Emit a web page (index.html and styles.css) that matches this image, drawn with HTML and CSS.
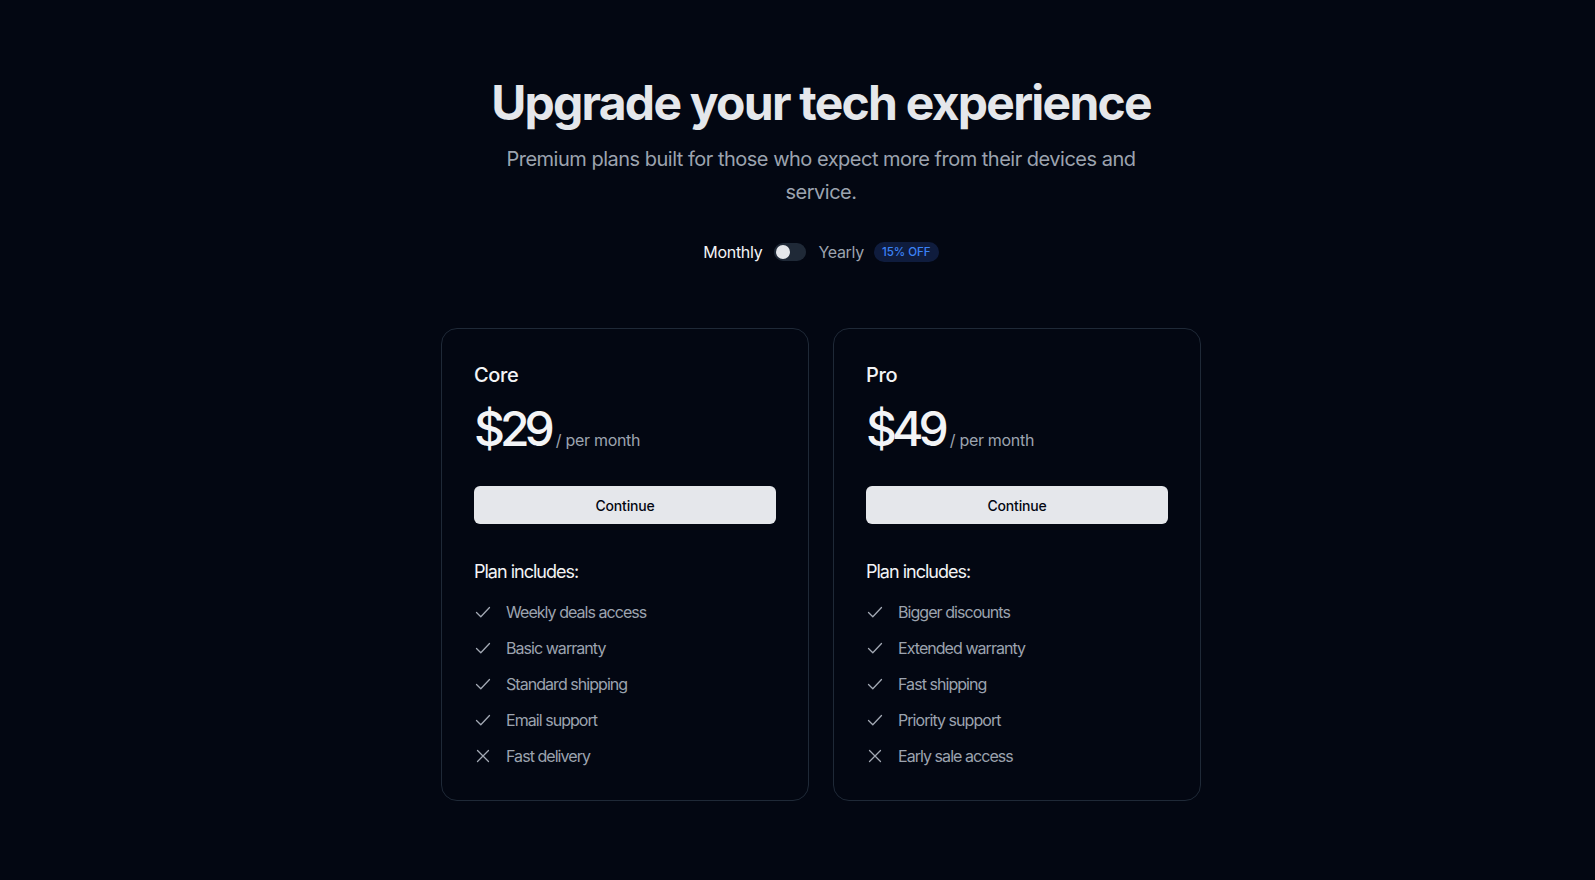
FILE: index.html
```html
<!DOCTYPE html>
<html lang="en">
<head>
    <meta charset="UTF-8">
    <meta name="viewport" content="width=device-width, initial-scale=1.0">
    <title>Pricing</title>
    <link rel="stylesheet" href="styles.css">
</head>
<body>

<main class="page">
    <header class="intro">
        <h1 class="title">Upgrade your tech experience</h1>
        <p class="subtitle">Premium plans built for those who expect more from their devices and service.</p>

        <div class="billing">
            <span class="billing-label active">Monthly</span>
            <button class="switch" aria-label="Toggle yearly billing"><span class="knob"></span></button>
            <span class="billing-label">Yearly</span>
            <span class="badge">15% OFF</span>
        </div>
    </header>

    <section class="plans">
        <div class="plan">
            <h2 class="plan-name">Core</h2>
            <div class="price"><span class="amount">$29</span><span class="period">/ per month</span></div>
            <button class="cta">Continue</button>
            <h3 class="includes">Plan includes:</h3>
            <ul class="features">
                <li><svg class="icon" viewBox="0 0 16 16"><path d="M1.5 8.5l4.3 4.3 8.7-9.3"/></svg>Weekly deals access</li>
                <li><svg class="icon" viewBox="0 0 16 16"><path d="M1.5 8.5l4.3 4.3 8.7-9.3"/></svg>Basic warranty</li>
                <li><svg class="icon" viewBox="0 0 16 16"><path d="M1.5 8.5l4.3 4.3 8.7-9.3"/></svg>Standard shipping</li>
                <li><svg class="icon" viewBox="0 0 16 16"><path d="M1.5 8.5l4.3 4.3 8.7-9.3"/></svg>Email support</li>
                <li><svg class="icon" viewBox="0 0 16 16"><path d="M2.5 2.5l11 11M13.5 2.5l-11 11"/></svg>Fast delivery</li>
            </ul>
        </div>

        <div class="plan">
            <h2 class="plan-name">Pro</h2>
            <div class="price"><span class="amount">$49</span><span class="period">/ per month</span></div>
            <button class="cta">Continue</button>
            <h3 class="includes">Plan includes:</h3>
            <ul class="features">
                <li><svg class="icon" viewBox="0 0 16 16"><path d="M1.5 8.5l4.3 4.3 8.7-9.3"/></svg>Bigger discounts</li>
                <li><svg class="icon" viewBox="0 0 16 16"><path d="M1.5 8.5l4.3 4.3 8.7-9.3"/></svg>Extended warranty</li>
                <li><svg class="icon" viewBox="0 0 16 16"><path d="M1.5 8.5l4.3 4.3 8.7-9.3"/></svg>Fast shipping</li>
                <li><svg class="icon" viewBox="0 0 16 16"><path d="M1.5 8.5l4.3 4.3 8.7-9.3"/></svg>Priority support</li>
                <li><svg class="icon" viewBox="0 0 16 16"><path d="M2.5 2.5l11 11M13.5 2.5l-11 11"/></svg>Early sale access</li>
            </ul>
        </div>
    </section>
</main>

</body>
</html>
```

FILE: styles.css
```css
* {
    box-sizing: border-box;
}
body {
    margin: 0;
    background-color: #030712;
    color: #e5e7eb;
    font-family: Inter, "Noto Sans", sans-serif;
}
.page {
    display: flex;
    flex-direction: column;
    align-items: center;
    padding: 79px 0 60px 47px;
}
.intro {
    display: flex;
    flex-direction: column;
    align-items: center;
    text-align: center;
}
.title {
    margin: 0;
    font-size: 48px;
    line-height: 48px;
    font-weight: 700;
    letter-spacing: -1.75px;
    color: #e5e7eb;
}
.subtitle {
    margin: 16px 0 0;
    max-width: 640px;
    font-size: 20px;
    line-height: 32.5px;
    letter-spacing: -0.5px;
    color: #9ca3af;
}
.billing {
    display: flex;
    align-items: center;
    gap: 12px;
    margin-top: 32px;
    height: 24px;
}
.billing-label {
    font-size: 16px;
    letter-spacing: -0.3px;
    color: #9ca3af;
}
.billing-label.active {
    color: #f3f4f6;
}
.billing-label + .badge {
    margin-left: -2px;
}
.switch {
    position: relative;
    width: 32px;
    height: 18px;
    padding: 0;
    border: none;
    border-radius: 9px;
    background-color: #1f2937;
    cursor: pointer;
}
.knob {
    position: absolute;
    top: 2px;
    left: 2px;
    width: 14px;
    height: 14px;
    border-radius: 50%;
    background-color: #e5e7eb;
}
.badge {
    padding: 3px 8px;
    border-radius: 999px;
    background-color: #0f1c3d;
    color: #3b82f6;
    font-size: 11.5px;
    line-height: 14px;
    font-weight: 500;
}
.plans {
    display: flex;
    gap: 24px;
    margin-top: 64px;
}
.plan {
    width: 368px;
    padding: 32px;
    border: 1px solid #1f2937;
    border-radius: 16px;
    background-color: #030712;
}
.plan-name {
    margin: 0;
    font-size: 20px;
    line-height: 28px;
    font-weight: 500;
    letter-spacing: -0.4px;
    color: #f3f4f6;
}
.price {
    display: flex;
    align-items: baseline;
    gap: 4px;
    margin-top: 16px;
}
.amount {
    font-size: 48px;
    line-height: 48px;
    font-weight: 500;
    letter-spacing: -5px;
    color: #f3f4f6;
}
.period {
    margin-left: 2px;
    font-size: 16px;
    letter-spacing: -0.3px;
    color: #9ca3af;
}
.cta {
    display: block;
    width: 100%;
    height: 38px;
    margin-top: 33px;
    border: none;
    border-radius: 6px;
    background-color: #e5e7eb;
    color: #030712;
    font-family: inherit;
    font-size: 14px;
    font-weight: 500;
    letter-spacing: -0.2px;
    cursor: pointer;
}
.includes {
    margin: 34px 0 0;
    font-size: 18px;
    line-height: 28px;
    font-weight: 400;
    letter-spacing: -1px;
    color: #f3f4f6;
}
.features {
    list-style: none;
    margin: 14px 0 0;
    padding: 0;
    display: flex;
    flex-direction: column;
    gap: 12px;
}
.features li {
    display: flex;
    align-items: center;
    gap: 15px;
    padding-left: 1px;
    font-size: 16px;
    line-height: 24px;
    letter-spacing: -0.95px;
    color: #9ca3af;
}
.icon {
    width: 16px;
    height: 16px;
    flex-shrink: 0;
    fill: none;
    stroke: #a3a9b4;
    stroke-width: 1.3;
    stroke-linecap: round;
    stroke-linejoin: round;
}
```
